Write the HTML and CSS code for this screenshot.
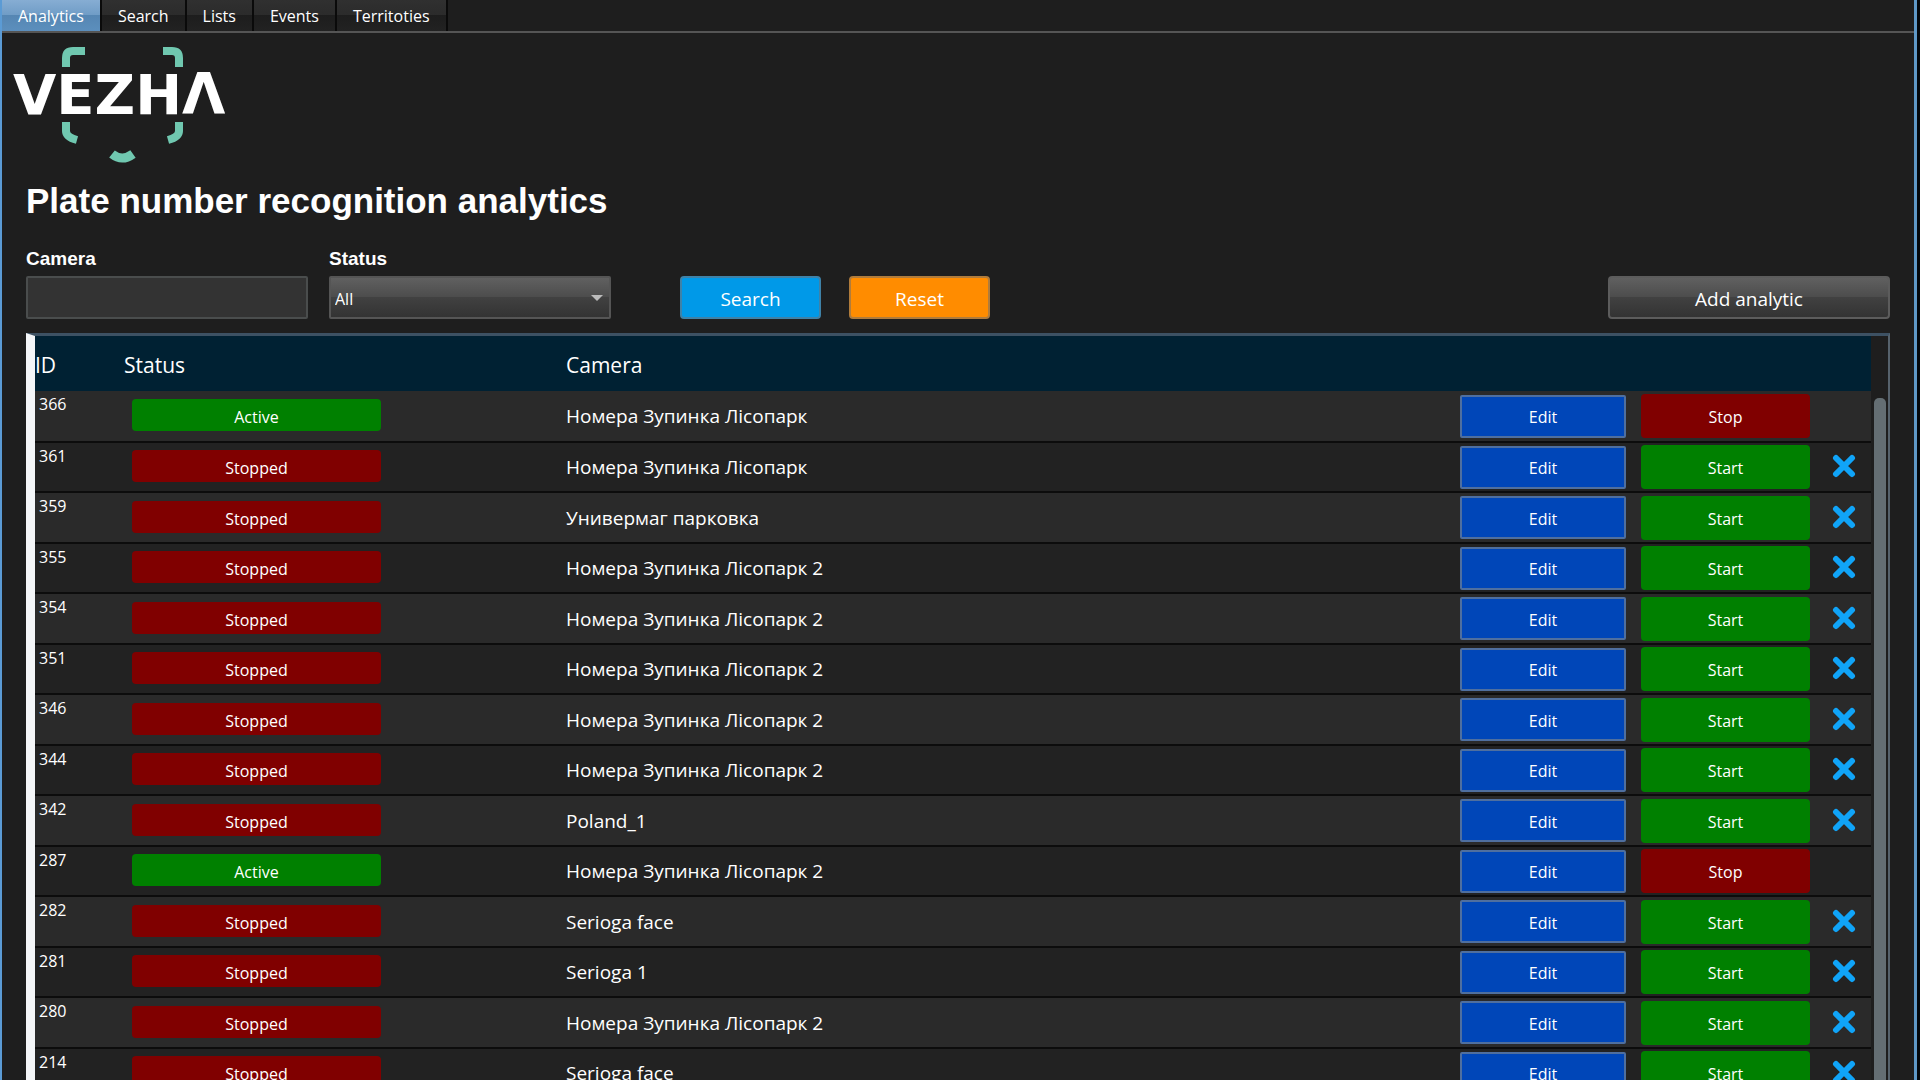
FILE: index.html
```
<!DOCTYPE html>
<html lang="en">
<head>
    <meta charset="UTF-8">
    <meta name="viewport" content="width=device-width, initial-scale=1.0">
    <title>Plate number recognition analytics</title>
    <link rel="stylesheet" href="styles.css">
</head>
<body>
    <nav class="tabs">
        <a class="tab active" href="#analytics">Analytics</a>
        <a class="tab" href="#search">Search</a>
        <a class="tab" href="#lists">Lists</a>
        <a class="tab" href="#events">Events</a>
        <a class="tab" href="#territories">Territoties</a>
    </nav>

    <svg class="logo" viewBox="0 0 240 130" role="img" aria-label="VEZHA">
        <g fill="none" stroke="#70c8b0" stroke-width="8">
            <path d="M66 31V22Q66 15 73 15H85"/>
            <path d="M163 15H172Q179 15 179 22V31"/>
            <path d="M66 86V95Q66 101 77 104"/>
            <path d="M179 86V95Q179 101 168 104"/>
            <path d="M112 118Q122 126 133 118" stroke-width="9"/>
        </g>
        <text class="logo-text" x="13" y="78">VEZHΛ</text>
    </svg>

    <main class="page">
        <h1>Plate number recognition analytics</h1>

        <form class="filters">
            <div class="field">
                <label for="camera">Camera</label>
                <input type="text" id="camera">
            </div>
            <div class="field">
                <label for="status">Status</label>
                <div class="select-wrap">
                    <select id="status">
                        <option>All</option>
                        <option>Active</option>
                        <option>Stopped</option>
                    </select>
                </div>
            </div>
            <button type="button" class="btn btn-search">Search</button>
            <button type="reset" class="btn btn-reset">Reset</button>
            <button type="button" class="btn btn-add">Add analytic</button>
        </form>

        <div class="grid">
            <table>
                <colgroup>
                    <col class="col-id">
                    <col class="col-status">
                    <col>
                    <col class="col-edit">
                    <col class="col-toggle">
                    <col class="col-remove">
                </colgroup>
                <thead>
                    <tr><th>ID</th><th>Status</th><th>Camera</th><th></th><th></th><th></th></tr>
                </thead>
                <tbody>
                    <tr>
                        <td class="id">366</td>
                        <td><span class="badge on">Active</span></td>
                        <td class="camera">Номера Зупинка Лісопарк</td>
                        <td><button class="edit">Edit</button></td>
                        <td><button class="toggle off">Stop</button></td>
                        <td></td>
                    </tr>
                    <tr>
                        <td class="id">361</td>
                        <td><span class="badge off">Stopped</span></td>
                        <td class="camera">Номера Зупинка Лісопарк</td>
                        <td><button class="edit">Edit</button></td>
                        <td><button class="toggle on">Start</button></td>
                        <td><button class="remove" aria-label="Remove"><svg viewBox="0 0 24 24"><path d="M4 4L20 20M20 4L4 20"/></svg></button></td>
                    </tr>
                    <tr>
                        <td class="id">359</td>
                        <td><span class="badge off">Stopped</span></td>
                        <td class="camera">Универмаг парковка</td>
                        <td><button class="edit">Edit</button></td>
                        <td><button class="toggle on">Start</button></td>
                        <td><button class="remove" aria-label="Remove"><svg viewBox="0 0 24 24"><path d="M4 4L20 20M20 4L4 20"/></svg></button></td>
                    </tr>
                    <tr>
                        <td class="id">355</td>
                        <td><span class="badge off">Stopped</span></td>
                        <td class="camera">Номера Зупинка Лісопарк 2</td>
                        <td><button class="edit">Edit</button></td>
                        <td><button class="toggle on">Start</button></td>
                        <td><button class="remove" aria-label="Remove"><svg viewBox="0 0 24 24"><path d="M4 4L20 20M20 4L4 20"/></svg></button></td>
                    </tr>
                    <tr>
                        <td class="id">354</td>
                        <td><span class="badge off">Stopped</span></td>
                        <td class="camera">Номера Зупинка Лісопарк 2</td>
                        <td><button class="edit">Edit</button></td>
                        <td><button class="toggle on">Start</button></td>
                        <td><button class="remove" aria-label="Remove"><svg viewBox="0 0 24 24"><path d="M4 4L20 20M20 4L4 20"/></svg></button></td>
                    </tr>
                    <tr>
                        <td class="id">351</td>
                        <td><span class="badge off">Stopped</span></td>
                        <td class="camera">Номера Зупинка Лісопарк 2</td>
                        <td><button class="edit">Edit</button></td>
                        <td><button class="toggle on">Start</button></td>
                        <td><button class="remove" aria-label="Remove"><svg viewBox="0 0 24 24"><path d="M4 4L20 20M20 4L4 20"/></svg></button></td>
                    </tr>
                    <tr>
                        <td class="id">346</td>
                        <td><span class="badge off">Stopped</span></td>
                        <td class="camera">Номера Зупинка Лісопарк 2</td>
                        <td><button class="edit">Edit</button></td>
                        <td><button class="toggle on">Start</button></td>
                        <td><button class="remove" aria-label="Remove"><svg viewBox="0 0 24 24"><path d="M4 4L20 20M20 4L4 20"/></svg></button></td>
                    </tr>
                    <tr>
                        <td class="id">344</td>
                        <td><span class="badge off">Stopped</span></td>
                        <td class="camera">Номера Зупинка Лісопарк 2</td>
                        <td><button class="edit">Edit</button></td>
                        <td><button class="toggle on">Start</button></td>
                        <td><button class="remove" aria-label="Remove"><svg viewBox="0 0 24 24"><path d="M4 4L20 20M20 4L4 20"/></svg></button></td>
                    </tr>
                    <tr>
                        <td class="id">342</td>
                        <td><span class="badge off">Stopped</span></td>
                        <td class="camera">Poland_1</td>
                        <td><button class="edit">Edit</button></td>
                        <td><button class="toggle on">Start</button></td>
                        <td><button class="remove" aria-label="Remove"><svg viewBox="0 0 24 24"><path d="M4 4L20 20M20 4L4 20"/></svg></button></td>
                    </tr>
                    <tr>
                        <td class="id">287</td>
                        <td><span class="badge on">Active</span></td>
                        <td class="camera">Номера Зупинка Лісопарк 2</td>
                        <td><button class="edit">Edit</button></td>
                        <td><button class="toggle off">Stop</button></td>
                        <td></td>
                    </tr>
                    <tr>
                        <td class="id">282</td>
                        <td><span class="badge off">Stopped</span></td>
                        <td class="camera">Serioga face</td>
                        <td><button class="edit">Edit</button></td>
                        <td><button class="toggle on">Start</button></td>
                        <td><button class="remove" aria-label="Remove"><svg viewBox="0 0 24 24"><path d="M4 4L20 20M20 4L4 20"/></svg></button></td>
                    </tr>
                    <tr>
                        <td class="id">281</td>
                        <td><span class="badge off">Stopped</span></td>
                        <td class="camera">Serioga 1</td>
                        <td><button class="edit">Edit</button></td>
                        <td><button class="toggle on">Start</button></td>
                        <td><button class="remove" aria-label="Remove"><svg viewBox="0 0 24 24"><path d="M4 4L20 20M20 4L4 20"/></svg></button></td>
                    </tr>
                    <tr>
                        <td class="id">280</td>
                        <td><span class="badge off">Stopped</span></td>
                        <td class="camera">Номера Зупинка Лісопарк 2</td>
                        <td><button class="edit">Edit</button></td>
                        <td><button class="toggle on">Start</button></td>
                        <td><button class="remove" aria-label="Remove"><svg viewBox="0 0 24 24"><path d="M4 4L20 20M20 4L4 20"/></svg></button></td>
                    </tr>
                    <tr>
                        <td class="id">214</td>
                        <td><span class="badge off">Stopped</span></td>
                        <td class="camera">Serioga face</td>
                        <td><button class="edit">Edit</button></td>
                        <td><button class="toggle on">Start</button></td>
                        <td><button class="remove" aria-label="Remove"><svg viewBox="0 0 24 24"><path d="M4 4L20 20M20 4L4 20"/></svg></button></td>
                    </tr>
                </tbody>
            </table>
            <div class="scrollbar"><div class="thumb"></div></div>
        </div>
    </main>
</body>
</html>
```
FILE: styles.css
```
* {
    box-sizing: border-box;
}
html {
    background-color: #04080c;
}
body {
    display: flex;
    flex-direction: column;
    height: 100vh;
    margin: 0 3px 0 0;
    overflow: hidden;
    background-color: #1e1e1e;
    border-left: 2px solid #5b9bd5;
    border-right: 3px solid #5f99c8;
    color: #fff;
    font-family: "Open Sans", "Noto Sans", sans-serif;
    font-size: 16px;
}
button, input, select {
    font-family: inherit;
    color: #fff;
}
button {
    padding: 0;
    cursor: pointer;
}

/* tabs */
.tabs {
    display: flex;
    flex: none;
    gap: 2px;
    height: 33px;
    background-color: #1e1e1e;
    border-bottom: 2px solid #555;
}
.tab {
    padding: 0 16px;
    color: #fff;
    font-size: 16px;
    line-height: 33px;
    text-decoration: none;
    background: linear-gradient(#303030, #2b2b2b 50%, #1d1d1d 50%, #222);
    box-shadow: 2px 0 0 #0a0a0a;
}
.tab.active {
    background: linear-gradient(#86add3, #6f9cc6 50%, #5586b3 50%, #5c8fbd);
}

/* logo */
.logo {
    flex: none;
    width: 240px;
    height: 130px;
    margin: 3px 0 0 -2px;
}
.logo-text {
    fill: #fff;
    font-family: "DejaVu Sans", sans-serif;
    font-size: 56px;
    font-weight: bold;
}

.page {
    display: flex;
    flex: 1;
    flex-direction: column;
    min-height: 0;
    padding: 14px 24px 0;
}
h1 {
    margin: 0 0 25px;
    font-family: "Liberation Sans", Arial, sans-serif;
    font-size: 35px;
    line-height: 42px;
}

/* filters */
.filters {
    display: flex;
    flex: none;
    align-items: flex-end;
    margin-bottom: 14px;
}
.field {
    width: 282px;
    margin-right: 21px;
}
.field label {
    display: block;
    margin-bottom: 5px;
    font-family: "Liberation Sans", Arial, sans-serif;
    font-size: 19px;
    font-weight: bold;
    line-height: 24px;
}
.field input,
.field select {
    display: block;
    width: 100%;
    height: 43px;
    padding: 2px 4px 0;
    border: 2px solid #555;
    border-radius: 2px;
    font-size: 16px;
}
.field input {
    background-color: #333;
    border-color: #4a4d4d;
}
.field select {
    appearance: none;
    background: linear-gradient(#606060, #4c4c4c 50%, #414141 50%, #333);
}
.select-wrap {
    position: relative;
}
.select-wrap::after {
    content: "";
    position: absolute;
    top: 19px;
    right: 8px;
    border: 6px solid transparent;
    border-top-color: #bbb;
    border-bottom: none;
}
.btn {
    width: 141px;
    height: 43px;
    padding-top: 3px;
    border: 2px solid #7a7a7a;
    border-radius: 4px;
    font-size: 19px;
}
.btn-search {
    margin: 0 28px 0 48px;
    background-color: #0099e8;
    border-color: #3f82a8;
}
.btn-reset {
    background-color: #ff8c00;
    border-color: #b07c3c;
}
.btn-add {
    width: 282px;
    margin-left: auto;
    background: linear-gradient(#606060, #4c4c4c 50%, #414141 50%, #333);
    border-color: #5c5c5c;
}

/* analytics list */
.grid {
    display: flex;
    flex: 1;
    align-items: flex-start;
    min-height: 0;
    overflow: hidden;
    border-top: 3px solid #3d5163;
    border-right: 2px solid #56626c;
    border-left: 9px solid #f4f6f8;
}
table {
    flex: 1;
    border-collapse: collapse;
    table-layout: fixed;
}
.col-id {
    width: 89px;
}
.col-status {
    width: 442px;
}
.col-edit {
    width: 181px;
}
.col-toggle {
    width: 178px;
}
.col-remove {
    width: 52px;
}
th {
    height: 55px;
    padding: 2px 0 0;
    background-color: #002133;
    font-size: 21px;
    font-weight: normal;
    text-align: left;
}
td {
    padding: 0;
    border-bottom: 2px solid #0c0c0c;
    vertical-align: middle;
}
tbody tr {
    height: 51px;
    background-color: #2a2a2a;
}
tbody tr:nth-child(even) {
    height: 50px;
    background-color: #222;
}
.id {
    padding: 1px 0 0 4px;
    font-size: 16px;
    line-height: 24px;
    vertical-align: top;
}
.badge {
    display: block;
    width: 249px;
    height: 32px;
    margin: 0 0 2px 8px;
    border-radius: 4px;
    font-size: 16px;
    line-height: 36px;
    text-align: center;
}
.camera {
    font-size: 19px;
}
.on {
    background-color: #008000;
}
.off {
    background-color: #800000;
}
.edit,
.toggle {
    display: block;
    padding-top: 2px;
    border-radius: 2px;
    font-size: 16px;
}
.edit {
    width: 166px;
    height: 43px;
    background-color: #0046b8;
    border: 2px solid #4f6f9f;
}
.toggle {
    width: 169px;
    height: 44px;
    border: none;
    border-radius: 4px;
}
.remove {
    display: block;
    width: 24px;
    height: 24px;
    margin: 0 0 2px 13px;
    background: none;
    border: none;
}
.remove svg {
    display: block;
    fill: none;
    stroke: #10a4f8;
    stroke-width: 6;
    stroke-linecap: round;
}
.scrollbar {
    display: flex;
    align-self: stretch;
    width: 17px;
    padding: 62px 2px 0 3px;
}
.thumb {
    flex: 1;
    background-color: #646e73;
    border-radius: 5px 5px 0 0;
}
```
